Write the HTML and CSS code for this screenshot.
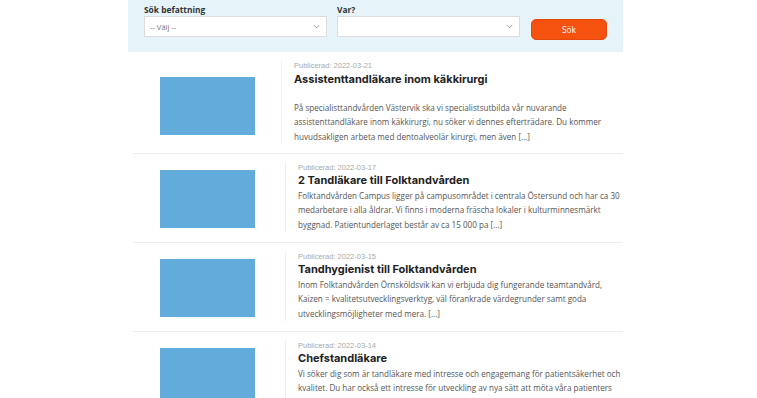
FILE: index.html
```html
<!DOCTYPE html>
<html lang="sv">
<head>
<meta charset="utf-8">
<title>Lediga jobb</title>
<link rel="stylesheet" href="styles.css">
</head>
<body>
<div class="page">
  <form class="search">
    <div class="field">
      <label class="label">Sök befattning</label>
      <div class="select"><span class="select-text">-- Välj --</span><svg class="chev" viewBox="0 0 8 5" width="7" height="5"><path d="M1 1l3 3 3-3" fill="none" stroke="#888" stroke-width="1"/></svg></div>
    </div>
    <div class="field">
      <label class="label">Var?</label>
      <div class="select"><span class="select-text"></span><svg class="chev" viewBox="0 0 8 5" width="7" height="5"><path d="M1 1l3 3 3-3" fill="none" stroke="#888" stroke-width="1"/></svg></div>
    </div>
    <div class="field field-btn">
      <button type="button" class="btn">Sök</button>
    </div>
  </form>

  <div class="list">
    <article class="item item-first">
      <div class="thumb"><div class="img"></div></div>
      <div class="body">
        <div class="date">Publicerad: 2022-03-21</div>
        <h2 class="title">Assistenttandläkare inom käkkirurgi</h2>
        <p class="desc">På specialisttandvården Västervik ska vi specialistsutbilda vår nuvarande assistenttandläkare inom käkkirurgi, nu söker vi dennes efterträdare. Du kommer huvudsakligen arbeta med dentoalveolär kirurgi, men även […]</p>
      </div>
    </article>
    <article class="item">
      <div class="thumb"><div class="img"></div></div>
      <div class="body">
        <div class="date">Publicerad: 2022-03-17</div>
        <h2 class="title">2 Tandläkare till Folktandvården</h2>
        <p class="desc">Folktandvården Campus ligger på campusområdet i centrala Östersund och har ca 30 medarbetare i alla åldrar. Vi finns i moderna fräscha lokaler i kulturminnesmärkt byggnad. Patientunderlaget består av ca 15 000 pa […]</p>
      </div>
    </article>
    <article class="item">
      <div class="thumb"><div class="img"></div></div>
      <div class="body">
        <div class="date">Publicerad: 2022-03-15</div>
        <h2 class="title">Tandhygienist till Folktandvården</h2>
        <p class="desc">Inom Folktandvården Örnsköldsvik kan vi erbjuda dig fungerande teamtandvård, Kaizen = kvalitetsutvecklingsverktyg, väl förankrade värdegrunder samt goda utvecklingsmöjligheter med mera. […]</p>
      </div>
    </article>
    <article class="item">
      <div class="thumb"><div class="img"></div></div>
      <div class="body">
        <div class="date">Publicerad: 2022-03-14</div>
        <h2 class="title">Chefstandläkare</h2>
        <p class="desc">Vi söker dig som är tandläkare med intresse och engagemang för patientsäkerhet och kvalitet. Du har också ett intresse för utveckling av nya sätt att möta våra patienters behov och förväntningar. […]</p>
      </div>
    </article>
  </div>
</div>
</body>
</html>
```

FILE: styles.css
```css
html, body {
  margin: 0;
  padding: 0;
  background: #fff;
}
body {
  font-family: "Open Sans", "Liberation Sans", sans-serif;
  overflow: hidden;
}
.page {
  width: 495px;
  margin-left: 128px;
}
.search {
  background: #e6f3f9;
  height: 52px;
  box-sizing: border-box;
  padding: 4px 16px 0 16px;
  display: grid;
  grid-template-columns: 183px 183px 76px;
  column-gap: 10px;
  align-items: start;
}
.field-btn {
  padding-top: 12px;
  margin-left: 1px;
}
.label {
  display: block;
  font-size: 8.4px;
  font-weight: 700;
  color: #333;
  line-height: 12px;
  height: 12px;
}
.select {
  height: 21px;
  box-sizing: border-box;
  background: #fff;
  border: 1px solid #dcdcdc;
  display: flex;
  align-items: center;
  justify-content: space-between;
  padding: 0 6px 0 5px;
}
.select-text {
  font-size: 7.6px;
  color: #777;
}
.chev {
  display: block;
}
.btn {
  width: 76px;
  height: 21px;
  border: 1px solid #e5480d;
  border-radius: 5px;
  background: #f5520f;
  color: #fff;
  font-family: "Open Sans", sans-serif;
  font-size: 8.4px;
  padding: 0;
}
.item {
  display: flex;
  border-bottom: 1px solid #eeeeee;
  margin-left: 5px;
  padding: 8px 0 9.5px 0;
}
.item-first {
  padding-top: 7.5px;
  padding-bottom: 8.5px;
}
.thumb {
  width: 157px;
  flex: none;
  box-sizing: border-box;
  display: flex;
  align-items: center;
  padding-left: 32px;
  padding-top: 5px;
  margin-left: -5px;
}
.item-first .thumb {
  width: 153px;
  padding-top: 8px;
}
.img {
  width: 95px;
  height: 58px;
  background: #62acdb;
}
.body {
  flex: 1;
  border-left: 1px solid #f0f0f0;
  padding-left: 12px;
}
.date {
  font-family: "Liberation Sans", Arial, sans-serif;
  font-size: 7.5px;
  color: #aaa;
  line-height: 11px;
}
.title {
  margin: 0 0 2px 0;
  font-family: Inter, "Open Sans", sans-serif;
  font-weight: 700;
  font-size: 11px;
  line-height: 14px;
  color: #222;
}
.item-first .title {
  margin: 1px 0 15px 0;
}
.desc {
  margin: 0;
  font-size: 8.1px;
  line-height: 14.5px;
  color: #555;
  max-height: 43.5px;
  overflow: hidden;
}
```
